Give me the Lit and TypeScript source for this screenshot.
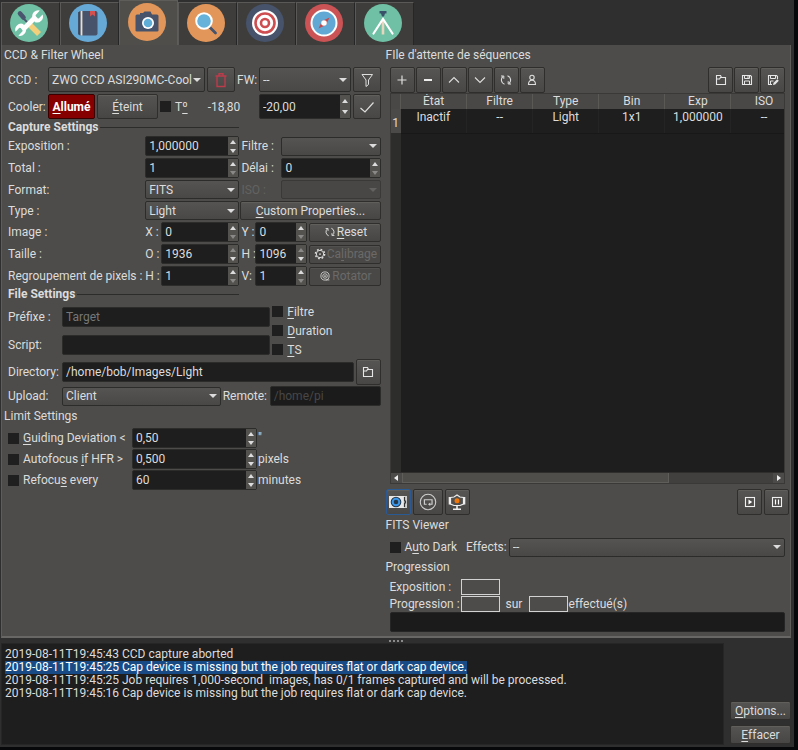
import { LitElement, html, css, svg, nothing, TemplateResult } from "lit";
import { customElement } from "lit/decorators.js";
import { classMap } from "lit/directives/class-map.js";

type Part = TemplateResult | string | typeof nothing;

const glyph = (body: unknown) =>
  html`<svg class="glyph" viewBox="0 0 16 16" width="16" height="16" aria-hidden="true">${body}</svg>`;

const glyphs: Record<string, TemplateResult> = {
  trash: glyph(svg`<path d="M2.5 4h11M6 4V1.700h4V4M4 4v10.500h8V4" fill="none" stroke="#bb3c4b" stroke-width="1.400"/>`),
  filter: glyph(svg`<path d="M3 2.500h10.500L9.500 8v4.500L7 14.500V8z" fill="none" stroke="#dedede" stroke-width="1"/>`),
  check: glyph(svg`<path d="M1.500 9l4.500 4L14.500 3.500" fill="none" stroke="#dedede" stroke-width="1.200"/>`),
  plus: glyph(svg`<path d="M3.500 8h9M8 3.500v9" fill="none" stroke="#dedede" stroke-width="1.200"/>`),
  minus: glyph(svg`<path d="M4 8h8" fill="none" stroke="#fff" stroke-width="1.800"/>`),
  up: glyph(svg`<path d="M3 10.500L8 5.500l5 5" fill="none" stroke="#dedede" stroke-width="1.100"/>`),
  down: glyph(svg`<path d="M3 5.500l5 5 5-5" fill="none" stroke="#dedede" stroke-width="1.100"/>`),
  cycle: glyph(svg`<path d="M6.500 12.300A4.600 4.600 0 0 1 5 4.500M9.500 3.700A4.600 4.600 0 0 1 11 11.500" fill="none" stroke="#dedede" stroke-width="1.100"/><path d="M3 4h2.800v2.800M13 12h-2.800V9.200" fill="none" stroke="#dedede" stroke-width="1"/>`),
  person: glyph(svg`<circle cx="8" cy="5.500" r="2.200" fill="none" stroke="#dedede" stroke-width="1.100"/><path d="M4.500 12.500c0-3 1.500-4.300 3.500-4.300s3.500 1.300 3.500 4.300z" fill="none" stroke="#dedede" stroke-width="1.100"/>`),
  folder: glyph(svg`<path d="M3.500 12.500v-9h4l1 2h4v7z" fill="none" stroke="#e6e6e6" stroke-width="1.100"/><path d="M3.500 7h3l1-1.500h5" fill="none" stroke="#e6e6e6" stroke-width="1.200"/>`),
  save: glyph(svg`<path d="M3.500 3.500h8l1 1v8h-9z" fill="none" stroke="#e6e6e6" stroke-width="1.100"/><path d="M5.500 3.500v3h5v-3M5.500 12.500v-3.500h5v3.500M9 4v2" fill="none" stroke="#e6e6e6"/>`),
  saveAs: glyph(svg`<path d="M7 12.500H3.500v-9h8l1 1V7" fill="none" stroke="#e6e6e6" stroke-width="1.100"/><path d="M5.500 3.500v3h5v-3M5.500 12.500v-3.500h3" fill="none" stroke="#e6e6e6"/><path d="M8 13l.6-2.200 3.600-3.600 1.600 1.600-3.600 3.600z" fill="#e6e6e6"/>`),
  gear: glyph(svg`<circle cx="8" cy="8" r="4.200" fill="none" stroke="#dedede" stroke-width="1.100"/><circle cx="8" cy="8" r="5.300" fill="none" stroke="#dedede" stroke-width="1.600" stroke-dasharray="2 2.160"/><circle cx="8" cy="8" r="1" fill="#dedede"/>`),
  rings: glyph(svg`<circle cx="8" cy="8" r="4.700" fill="none" stroke="#cfcfcf"/><circle cx="8" cy="8" r="2.600" fill="none" stroke="#cfcfcf"/><circle cx="8" cy="8" r="1" fill="#cfcfcf"/><path d="M9 12.500h4" stroke="#cfcfcf"/>`),
  play: glyph(svg`<rect x="3.500" y="3.500" width="9" height="9" fill="none" stroke="#f0f0f0" stroke-width="1.100"/><path d="M6.500 5.500v5L10.200 8z" fill="#fff"/>`),
  pause: glyph(svg`<rect x="3.500" y="3.500" width="9" height="9" fill="none" stroke="#f0f0f0" stroke-width="1.100"/><path d="M6.500 5.500v5M9.500 5.500v5" stroke="#fff" stroke-width="1.200"/>`),
};

const cameraView = html`<svg viewBox="0 0 20 14" width="20" height="14" aria-hidden="true">
  <rect x="1" y="1" width="15" height="12" fill="#e8e8e8"/><path d="M16 1h3v12h-3z" fill="#cfcfcf"/>
  <path d="M16.500 2v4h1v2h-1v4" fill="none" stroke="#333" stroke-width="1.200"/>
  <circle cx="8" cy="7" r="5.300" fill="#273747"/><circle cx="8" cy="7" r="3.300" fill="none" stroke="#3a96ea" stroke-width="2"/></svg>`;
const loopView = html`<svg viewBox="0 0 20 20" width="18" height="18" aria-hidden="true">
  <circle cx="10" cy="10" r="8.600" fill="none" stroke="#cfcfcf" stroke-width="1.200"/>
  <path d="M8.500 12.500H6V7.500h8.500v5H12" fill="none" stroke="#cfcfcf" stroke-width="1.300"/><path d="M12.500 10.500v4l-2.500-2z" fill="#cfcfcf"/></svg>`;
const liveView = html`<svg viewBox="0 0 20 18" width="20" height="18" aria-hidden="true">
  <path d="M3.500 4.500L7 4l3-2 3 2 3.500.5V11L13 12.500H7L3.500 11z" fill="none" stroke="#eee" stroke-width="1.200"/>
  <path d="M2.500 4v7.500M17.500 4v7.500" stroke="#eee" stroke-width="1.600"/><path d="M10 13v3M6 16.300h8" stroke="#eee" stroke-width="1.600"/>
  <circle cx="10" cy="7.700" r="2.500" fill="#f0760a"/></svg>`;

const badge = (fill: string, body: unknown) =>
  html`<svg viewBox="0 0 38 38" width="38" height="38" aria-hidden="true"><circle cx="19" cy="19" r="19" fill=${fill}/>${body}</svg>`;

const tabs = [
  { name: "Setup", icon: badge("#6fc0a5", svg`
    <path d="M20 21l9 9" stroke="#f3cf7b" stroke-width="5.500"/><path d="M13 14l7 7" stroke="#4a566e" stroke-width="1.800"/>
    <path d="M10 9.500l3.500 4" stroke="#4a566e" stroke-width="4.600" stroke-linecap="round"/>
    <path d="M12.500 26L26 12.500" stroke="#fff" stroke-width="4.800"/>
    <path d="M22.500 14a6 6 0 0 1 7.300-7.500l-4.300 4.800.6 2.600 2.700.5 3.800-4a6 6 0 0 1-7.600 7.800z" fill="#fff"/>
    <path d="M15.700 24.200a6 6 0 0 1-7.300 7.500l4.300-4.800-.6-2.600-2.700-.5-3.800 4a6 6 0 0 1 7.600-7.800z" fill="#fff"/>`) },
  { name: "Scheduler", icon: badge("#67a9d6", svg`
    <rect x="9.500" y="7" width="19" height="24.500" rx="2" fill="#46536b"/><path d="M10 8v22.500" stroke="#39445a" stroke-width="1.500"/>
    <path d="M12.500 7v24.500" stroke="#e9e0cb" stroke-width="1.800"/><path d="M21 7h5v5.500l-2.500-2-2.500 2z" fill="#d6504e"/>`) },
  { name: "Capture", icon: badge("#e2965a", svg`
    <path d="M7.500 13q0-1.500 1.500-1.500h3V10h3l1.500-1.500h6L24 11.500h5q1.500 0 1.500 1.500v14.500q0 1-1.500 1H9q-1.500 0-1.500-1z" fill="#46536b"/>
    <circle cx="20" cy="20" r="6" fill="#fff"/><circle cx="20" cy="20" r="4.300" fill="#5eaed8"/>`) },
  { name: "Focus", icon: badge("#e2965a", svg`
    <path d="M21.500 22l7 7" stroke="#46536b" stroke-width="2.800" stroke-linecap="round"/>
    <circle cx="17" cy="17" r="7.800" fill="#67b2da" stroke="#fff" stroke-width="2"/>`) },
  { name: "Align", icon: badge("#46536b", svg`
    <circle cx="19" cy="19" r="13" fill="#fff"/><circle cx="19" cy="19" r="9.500" fill="none" stroke="#cd4d50" stroke-width="2.600"/>
    <circle cx="19" cy="19" r="4" fill="none" stroke="#cd4d50" stroke-width="2.600"/>`) },
  { name: "Guide", icon: badge("#cc5355", svg`
    <circle cx="19" cy="19" r="12.500" fill="#62a8d4" stroke="#fff" stroke-width="2"/>
    <path d="M13.500 24.500l3.500-7.500 4 4zM24.500 13.500l-7.500 3.500 4 4z" fill="#c64a4c"/><circle cx="19" cy="19" r="2.800" fill="#fff"/>`) },
  { name: "Mount", icon: badge("#6fc0a5", svg`
    <path d="M15.500 7h7v2.500H21l-1 3h-2l-1-3h-1.500z" fill="#39526a"/><path d="M19 16v14.500" stroke="#e5d6bd" stroke-width="2.600"/>
    <path d="M9.500 29.500L19 15l9.500 14.500" fill="none" stroke="#fff" stroke-width="2.200" stroke-linecap="round"/>`) },
];

const spin = (label: string, value: string, off: "" | "up" | "down" = "") => html`
  <span class="spin">
    <input class="text" type="text" aria-label=${label} .value=${value} />
    <span class="steps">
      <button class=${classMap({ step: true, off: off === "up" })} aria-label="${label} +"><i class="tri tri-up"></i></button>
      <button class=${classMap({ step: true, off: off === "down" })} aria-label="${label} −"><i class="tri tri-down"></i></button>
    </span>
  </span>`;

const combo = (label: string, value: string, disabled = false) => html`
  <span class=${classMap({ combo: true, disabled })}>
    <select aria-label=${label} ?disabled=${disabled}><option>${value}</option></select>
  </span>`;

const tool = (label: string, icon: Part, extra = "") => html`<button class="tool ${extra}" aria-label=${label}>${icon}</button>`;

const tick = (text: Part) => html`<label class="tick"><input type="checkbox" /><span>${text}</span></label>`;

const columns = ["État", "Filtre", "Type", "Bin", "Exp", "ISO"];
const job = ["Inactif", "--", "Light", "1x1", "1,000000", "--"];

const log = [
  "2019-08-11T19:45:43 CCD capture aborted",
  "2019-08-11T19:45:25 Cap device is missing but the job requires flat or dark cap device.",
  "2019-08-11T19:45:25 Job requires 1,000-second  images, has 0/1 frames captured and will be processed.",
  "2019-08-11T19:45:16 Cap device is missing but the job requires flat or dark cap device.",
];

@customElement("app-root")
export class AppRoot extends LitElement {
  static styles = css`
    :host {
      display: block;
      min-height: 100vh;
      box-sizing: border-box;
      padding: 0 4px 4px 0;
      background: #06080a;
      color: #dcdcdc;
      font: 12px/16px Roboto, "Noto Sans", sans-serif;
    }
    * { box-sizing: border-box; }
    button, input, select { font: inherit; color: inherit; margin: 0; }
    u { text-underline-offset: 2px; }
    .window { min-height: calc(100vh - 4px); display: flex; flex-direction: column; background: #2f2f2f; padding: 0 3px 2px 1px; }

    .tabs { display: flex; height: 45px; align-items: flex-end; }
    .tab { width: 59px; height: 43px; padding: 0 3px 3px 0; border: 1px solid #5a5957; border-right-color: #262626; border-bottom: 0; background: #3e3d3b; display: grid; place-items: center; }
    .tab.active { height: 45px; background: #4f4e4b; padding: 0 3px 3px 0; border-color: #5e5d5a; }
    .tab svg { display: block; }

    .panel { flex: 1; display: grid; grid-template-columns: minmax(0, 382fr) minmax(0, 407fr); background: #4d4c4a; border: 1px solid #5e5d5a; border-top: 0; border-bottom: 2px solid #686765; padding-bottom: 4px; }
    .side { display: flex; flex-direction: column; min-width: 0; }
    .title { margin: 0; padding: 2px 2px 0; height: 22px; font-size: 12px; font-weight: 400; }
    .left .body { padding: 0 3px 0 6px; }
    .right .body { padding: 0 5px 0 6px; }
    .heading { display: flex; align-items: center; gap: 2px; margin: 0; height: 16px; width: 231px; font-size: 12px; font-weight: 700; }
    .heading::after { content: ""; flex: 1; height: 1px; background: #2c2c2b; }

    .row { display: flex; align-items: center; gap: 3px; white-space: nowrap; }
    .tools { gap: 1px; }
    .grow { flex: 1; min-width: 0; }
    .tall { --h: 25px; }
    .label { white-space: nowrap; }
    .dim { color: #636260; }

    .combo { position: relative; display: flex; min-width: 0; }
    .combo::after { content: ""; position: absolute; right: 4px; top: calc(50% - 2px); border: 4px solid transparent; border-top-color: #dcdcdc; border-bottom: 0; pointer-events: none; }
    .combo select { appearance: none; width: 100%; height: var(--h, 19px); padding: 0 12px 0 3px; border: 1px solid #2c2c2b; border-radius: 2px; background: linear-gradient(#555452, #494846); }
    .combo.disabled::after { border-top-color: #636260; }
    .combo.disabled select { opacity: 1; color: #636260; background: #484745; border-color: #3a3938; }

    .spin { display: flex; min-width: 0; height: var(--h, 20px); border: 1px solid #2c2c2b; border-radius: 2px; background: #1e1e1e; }
    .text { flex: 1; width: 100%; min-width: 0; padding: 0 0 0 3px; border: 0; background: transparent; outline: 0; }
    .steps { display: flex; flex-direction: column; width: 10px; flex: none; }
    .step { flex: 1; min-height: 0; padding: 0; border: 0; background: #53524f; display: grid; place-items: center; }
    .tri { width: 0; height: 0; border: 3px solid transparent; }
    .tri-up { border-top: 0; border-bottom: 4px solid #dcdcdc; }
    .tri-down { border-bottom: 0; border-top: 4px solid #dcdcdc; }
    .off .tri-up { border-bottom-color: #8a8987; }
    .off .tri-down { border-top-color: #8a8987; }

    .entry { width: 100%; min-width: 0; height: 20px; padding: 0 3px; border: 1px solid #2c2c2b; border-radius: 2px; background: #1e1e1e; outline: 0; }
    .entry::placeholder { color: #777; opacity: 1; }
    .entry:disabled { background: #1b1b1b; }
    .entry:disabled::placeholder { color: #474747; }

    .push { height: var(--h, 19px); padding: 0 2px; border: 1px solid #2f2e2d; border-radius: 2px; background: linear-gradient(#555452, #474644); box-shadow: inset 0 1px #605f5c; display: flex; align-items: center; justify-content: center; white-space: nowrap; min-width: 0; width: 100%; }
    .push.on { background: #870000; border-color: #3a0000; box-shadow: none; color: #fff; font-weight: 700; }
    .push.faded { color: #6b6a68; background: #494846; box-shadow: inset 0 1px #52514f; }
    .tool { width: 25px; height: 26px; flex: none; padding: 0; border: 1px solid #2f2e2d; border-radius: 2px; background: linear-gradient(#565553, #484745); box-shadow: inset 0 1px #605f5c; display: grid; place-items: center; }
    .tool.wide { width: 28px; height: 25px; }
    .tool.loop { width: 30px; }
    .tool.active { border-color: #2a5a94; }
    .glyph { display: block; flex: none; }
    .push .glyph { width: 14px; height: 14px; }

    .tick { display: flex; align-items: center; gap: 4px; white-space: nowrap; height: 19px; }
    .tick input { appearance: none; width: 11px; height: 11px; flex: none; background: #1f1f1f; }

    .ccd { display: grid; grid-template-columns: 38px minmax(0, 158fr) 28px 20px minmax(0, 92fr) 28px; column-gap: 2px; row-gap: 2px; align-items: center; }
    .cooler { grid-column: 2 / 5; display: flex; align-items: center; }
    .cooler .on { width: 47px; margin-right: 2px; }
    .cooler .cold { width: 61px; margin-right: 2px; }
    .cooler .tick { margin-right: 20px; }

    .settings { display: grid; grid-template-columns: minmax(0, 137fr) 16px minmax(0, 79fr) 15px 26px 28px minmax(0, 71fr); align-items: center; row-gap: 2px; padding-top: 1px; }
    .settings > * { min-width: 0; }
    .c1 { grid-column: 1; }
    .c2 { grid-column: 2; }
    .c3 { grid-column: 3; margin-right: 1px; }
    .c23 { grid-column: 2 / 4; margin-right: 1px; }
    .c4 { grid-column: 4; padding-left: 1px; }
    .c45 { grid-column: 4 / 6; padding-left: 1px; }
    .c56 { grid-column: 5 / 7; margin-right: 2px; }
    .c67 { grid-column: 6 / 8; }
    .c47 { grid-column: 4 / 8; }
    .c7 { grid-column: 7; }

    .grid2 { display: grid; grid-template-columns: 52px minmax(0, 206fr) minmax(0, 107fr); column-gap: 2px; }
    .names { grid-column: 1 / 3; display: grid; grid-template-columns: 52px minmax(0, 1fr); gap: 8px 2px; align-items: center; align-content: center; }
    .directory { display: grid; grid-template-columns: 52px minmax(0, 1fr) 25px; gap: 2px; align-items: center; }
    .upload { display: grid; grid-template-columns: 52px minmax(0, 159fr) 45px minmax(0, 111fr); gap: 2px; align-items: center; margin-top: 1px; }

    .limits { display: grid; grid-template-columns: 123px 125px 1fr; gap: 1px 1px; align-items: center; }

    .frame { background: #1e1e1e; border: 1px solid #3a3938; height: 391px; display: flex; flex-direction: column; overflow: hidden; }
    .clip { flex: 1; overflow: hidden; background: linear-gradient(90deg, #2d2d2c 10px, #1e1e1e 10px); }
    .queue { border-collapse: collapse; table-layout: fixed; width: 407px; }
    .queue th, .queue td { padding: 0; font-weight: 400; text-align: center; }
    .queue thead th { height: 15px; line-height: 15px; background: #494846; border-right: 1px solid #5a5956; }
    .queue tbody th { height: 24px; background: #4b4a48; vertical-align: bottom; line-height: 20px; }
    .queue td { height: 24px; line-height: 16px; vertical-align: top; border-right: 1px solid #242424; border-bottom: 1px solid #181818; }
    .corner { width: 10px; }
    .scroll { height: 11px; display: flex; background: #41403e; border-top: 1px solid #2f2e2d; }
    .scroll button { width: 11px; padding: 0; border: 0; background: #4c4b49; display: grid; place-items: center; }
    .thumb { width: 68%; background: #4f4e4b; border: 1px solid #5f5e5b; border-width: 0 1px 1px; margin-right: auto; }
    .tri-left { border-left: 0; border-right: 4px solid #eee; }
    .tri-right { border-right: 0; border-left: 4px solid #eee; }

    .views { padding: 4px 1px 0 2px; gap: 2px; height: 31px; }
    .viewer { gap: 2px; height: 20px; }
    .viewer .tick { margin-right: 7px; }
    .progress { display: grid; grid-template-columns: 71px 39px 29px 39px 1fr; row-gap: 1px; align-items: center; white-space: nowrap; }
    .progress .box { display: block; height: 16px; border: 1px solid #d2d2d2; }
    .progress .sur { padding-left: 6px; }
    .progress .end { padding-left: 1px; }
    .bar { height: 20px; background: #1b1b1b; border: 1px solid #262626; border-radius: 2px; }

    .grip { height: 5px; display: grid; place-items: center; }
    .grip i { width: 14px; border-top: 2px dotted #8a8a8a; }
    .foot { display: flex; gap: 6px; height: 102px; }
    .log { flex: 1; min-width: 0; margin: 0; padding: 4px 3px; list-style: none; background: #1e1e1e; border: 1px solid #262626; line-height: 13px; white-space: pre; overflow: hidden; }
    .log li { width: max-content; }
    .log .picked { background: #184a85; color: #fff; }
    .actions { width: 61px; display: flex; flex-direction: column; justify-content: flex-end; gap: 5px; padding-bottom: 1px; }
  `;

  render() {
    return html`
      <main class="window">
        <nav class="tabs" aria-label="Modules">
          ${tabs.map((t) => html`<button class=${classMap({ tab: true, active: t.name === "Capture" })} aria-label=${t.name}>${t.icon}</button>`)}
        </nav>
        <div class="panel">
          <section class="side left">${this.camera()}</section>
          <section class="side right">${this.sequence()}</section>
        </div>
        <div class="grip"><i></i></div>
        <footer class="foot">
          <ul class="log">${log.map((l, i) => html`<li class=${i === 1 ? "picked" : ""}>${l}</li>`)}</ul>
          <div class="actions">
            <button class="push"><span><u>O</u>ptions...</span></button>
            <button class="push"><span><u>E</u>ffacer</span></button>
          </div>
        </footer>
      </main>`;
  }

  private camera() {
    return html`
      <h2 class="title">CCD &amp; Filter Wheel</h2>
      <div class="body">
        <div class="ccd tall">
          <span class="label">CCD :</span>
          ${combo("CCD", "ZWO CCD ASI290MC-Cool")}
          ${tool("Supprimer", glyphs.trash, "wide")}
          <span class="label">FW:</span>
          ${combo("FW", "--")}
          ${tool("Filtres", glyphs.filter, "wide")}
          <span class="label">Cooler:</span>
          <div class="cooler">
            <button class="push on"><span><u>A</u>llumé</span></button>
            <button class="push cold"><span><u>É</u>teint</span></button>
            ${tick(html`T<u>º</u>`)}
            <output>-18,80</output>
          </div>
          ${spin("Température", "-20,00")}
          ${tool("Appliquer", glyphs.check, "wide")}
        </div>
        <h3 class="heading">Capture Settings</h3>
        <div class="settings">
          <span class="label c1">Exposition :</span><span class="c23">${spin("Exposition", "1,000000")}</span>
          <span class="label c45">Filtre :</span><span class="c67">${combo("Filtre", "")}</span>
          <span class="label c1">Total :</span><span class="c23">${spin("Total", "1", "down")}</span>
          <span class="label c45">Délai :</span><span class="c67">${spin("Délai", "0", "down")}</span>
          <span class="label c1">Format:</span><span class="c23">${combo("Format", "FITS")}</span>
          <span class="label c45 dim">ISO :</span><span class="c67">${combo("ISO", "", true)}</span>
          <span class="label c1">Type :</span><span class="c23">${combo("Type", "Light")}</span>
          <button class="push c47"><span><u>C</u>ustom Properties...</span></button>
          <span class="label c1">Image :</span><span class="label c2">X :</span><span class="c3">${spin("X", "0", "down")}</span>
          <span class="label c4">Y :</span><span class="c56">${spin("Y", "0", "down")}</span>
          <button class="push c7">${glyphs.cycle}<span><u>R</u>eset</span></button>
          <span class="label c1">Taille :</span><span class="label c2">O :</span><span class="c3">${spin("O", "1936", "up")}</span>
          <span class="label c4">H :</span><span class="c56">${spin("H", "1096", "up")}</span>
          <button class="push faded c7" disabled>${glyphs.gear}<span>Ca<u>l</u>ibrage</span></button>
          <span class="label c1">Regroupement de pixels :</span><span class="label c2">H :</span><span class="c3">${spin("Regroupement H", "1", "down")}</span>
          <span class="label c4">V:</span><span class="c56">${spin("Regroupement V", "1", "down")}</span>
          <button class="push faded c7" disabled>${glyphs.rings}<span>Rotator</span></button>
        </div>
        <h3 class="heading">File Settings</h3>
        <div class="grid2">
          <div class="names">
            <label for="prefix">Préfixe :</label><input id="prefix" class="entry" type="text" placeholder="Target" />
            <label for="script">Script:</label><input id="script" class="entry" type="text" />
          </div>
          <div>${tick(html`<u>F</u>iltre`)}${tick(html`<u>D</u>uration`)}${tick(html`<u>T</u>S`)}</div>
        </div>
        <div class="directory">
          <label for="dir">Directory:</label><input id="dir" class="entry" type="text" .value=${"/home/bob/Images/Light"} />
          ${tool("Parcourir", glyphs.folder)}
        </div>
        <div class="upload">
          <span class="label">Upload:</span>${combo("Upload", "Client")}
          <label for="remote">Remote:</label><input id="remote" class="entry" type="text" placeholder="/home/pi" disabled />
        </div>
      </div>
      <h2 class="title">Limit Settings</h2>
      <div class="body limits">
        ${tick(html`<u>G</u>uiding Deviation &lt;`)}${spin("Guiding Deviation", "0,50")}<span>"</span>
        ${tick(html`Autofocus <u>i</u>f HFR &gt;`)}${spin("Autofocus", "0,500")}<span>pixels</span>
        ${tick(html`Refocu<u>s</u> every`)}${spin("Refocus", "60")}<span>minutes</span>
      </div>`;
  }

  private sequence() {
    return html`
      <h2 class="title">FIle d'attente de séquences</h2>
      <div class="body">
        <div class="row tools">
          ${tool("Ajouter", glyphs.plus)}${tool("Retirer", glyphs.minus)}${tool("Monter", glyphs.up)}
          ${tool("Descendre", glyphs.down)}${tool("Réinitialiser", glyphs.cycle)}${tool("Observateur", glyphs.person)}
          <span class="grow"></span>
          ${tool("Ouvrir", glyphs.folder)}${tool("Enregistrer", glyphs.save)}${tool("Enregistrer sous", glyphs.saveAs)}
        </div>
        <div class="frame">
          <div class="clip">
            <table class="queue">
              <colgroup><col class="corner" />${columns.map(() => html`<col />`)}</colgroup>
              <thead><tr><th></th>${columns.map((c) => html`<th scope="col">${c}</th>`)}</tr></thead>
              <tbody><tr><th scope="row">1</th>${job.map((c) => html`<td>${c}</td>`)}</tr></tbody>
            </table>
          </div>
          <div class="scroll">
            <button aria-label="Gauche"><i class="tri tri-left"></i></button>
            <span class="thumb"></span>
            <button aria-label="Droite"><i class="tri tri-right"></i></button>
          </div>
        </div>
      </div>
      <div class="row views">
        ${tool("Aperçu", cameraView, "active")}${tool("Boucle", loopView, "loop")}${tool("Vidéo", liveView)}
        <span class="grow"></span>
        ${tool("Démarrer", glyphs.play)}${tool("Pause", glyphs.pause)}
      </div>
      <h2 class="title">FITS Viewer</h2>
      <div class="body">
        <div class="row viewer">
          ${tick(html`A<u>u</u>to Dark`)}<span>Effects:</span><span class="grow">${combo("Effects", "--")}</span>
        </div>
      </div>
      <h2 class="title">Progression</h2>
      <div class="body">
        <div class="progress">
          <span>Exposition :</span><output class="box"></output><span></span><span></span><span></span>
          <span>Progression :</span><output class="box"></output><span class="sur">sur</span><output class="box"></output><span class="end">effectué(s)</span>
        </div>
        <div class="bar" role="progressbar" aria-label="Progression"></div>
      </div>`;
  }
}
